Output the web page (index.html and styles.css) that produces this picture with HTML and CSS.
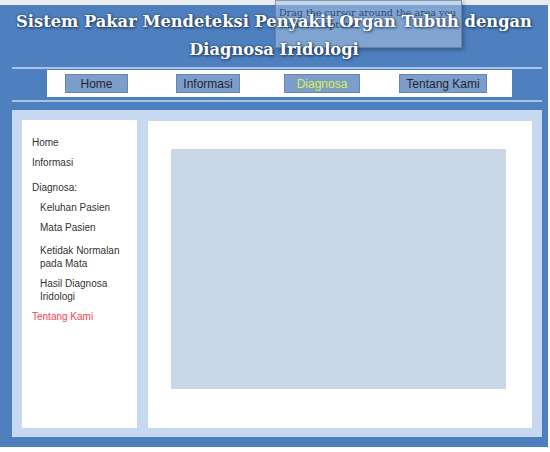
FILE: index.html
```html
<!DOCTYPE html>
<html lang="id">
<head>
    <meta charset="UTF-8">
    <meta name="viewport" content="width=device-width, initial-scale=1.0">
    <title>Sistem Pakar Iridologi</title>
    <link rel="stylesheet" href="styles.css">
</head>
<body>
    <div class="page">
        <header>
            <h1>Sistem Pakar Mendeteksi Penyakit Organ Tubuh dengan<br>Diagnosa Iridologi</h1>
        </header>
        <div class="menu-wrap">
            <nav class="menu">
                <a href="#" class="btn btn-home">Home</a>
                <a href="#" class="btn btn-info">Informasi</a>
                <a href="#" class="btn btn-diag active">Diagnosa</a>
                <a href="#" class="btn btn-about">Tentang Kami</a>
            </nav>
        </div>
        <div class="content">
            <aside class="sidebar">
                <a href="#" class="side-link">Home</a>
                <a href="#" class="side-link">Informasi</a>
                <div class="side-title">Diagnosa:</div>
                <a href="#" class="side-sub">Keluhan Pasien</a>
                <a href="#" class="side-sub">Mata Pasien</a>
                <a href="#" class="side-sub spaced">Ketidak Normalan pada Mata</a>
                <a href="#" class="side-sub">Hasil Diagnosa Iridologi</a>
                <a href="#" class="side-link current">Tentang Kami</a>
            </aside>
            <main class="main">
                <div class="image-box"></div>
            </main>
        </div>
    </div>

    <div class="snip-tip">Drag the cursor around the area you<br>want to capture.</div>
</body>
</html>
```

FILE: styles.css
```css
body {
    margin: 0;
    padding: 0;
    background: #ffffff;
    font-family: 'Liberation Sans', Arial, sans-serif;
    border-top: 5px solid #e9edf2;
}
.page {
    width: 548px;
    box-sizing: border-box;
    background: #4e80bf;
    padding: 0 6px 10px 12px;
}
header {
    height: 64px;
    box-sizing: border-box;
    padding-top: 3px;
    border-bottom: 2px solid #a8c3e5;
    position: relative;
    z-index: 2;
}
header h1 {
    margin: 0 0 0 -6px;
    font-family: 'DejaVu Serif', Georgia, serif;
    font-weight: bold;
    font-size: 16.3px;
    line-height: 28px;
    text-align: center;
    color: #ffffff;
    text-shadow: 0 0 2px rgba(20, 40, 70, 0.7), 1px 1px 3px rgba(20, 40, 70, 0.8);
}
.menu-wrap {
    padding: 1px 30px 3px 35px;
    border-bottom: 2px solid #a8c3e5;
}
.menu {
    background: #ffffff;
    height: 27px;
    display: flex;
    align-items: center;
    padding-left: 18px;
}
.btn {
    display: block;
    height: 19px;
    line-height: 19px;
    box-sizing: border-box;
    text-align: center;
    background: #7d9dca;
    border: 1px solid #6686b6;
    color: #1f2633;
    font-size: 12px;
    text-decoration: none;
}
.btn-home { width: 63px; }
.btn-info { width: 64px; margin-left: 48px; }
.btn-diag { width: 76px; margin-left: 44px; }
.btn-about { width: 88px; margin-left: 39px; }
.btn.active {
    color: #d8f24a;
}
.content {
    margin-top: 8px;
    background: #c6d9f1;
    padding: 10px 10px 9px 10px;
    display: flex;
    gap: 11px;
    height: 327px;
    box-sizing: border-box;
}
.sidebar {
    width: 115px;
    background: #ffffff;
    padding: 16px 0 0 10px;
    box-sizing: border-box;
    display: flex;
    flex-direction: column;
    align-items: flex-start;
}
.side-link,
.side-title,
.side-sub {
    font-size: 10px;
    line-height: 13px;
    color: #333333;
    text-decoration: none;
    margin-bottom: 7px;
}
.side-title {
    margin-top: 5px;
}
.side-sub {
    margin-left: 8px;
    max-width: 82px;
}
.side-sub.spaced {
    margin-top: 3px;
}
.side-link.current {
    color: #f2434f;
}
.main {
    flex: 1;
    background: #ffffff;
    margin-top: 1px;
    padding: 28px 26px 39px 23px;
}
.image-box {
    height: 100%;
    background: #c8d6e6;
}
.snip-tip {
    position: absolute;
    left: 275px;
    top: 0;
    width: 187px;
    height: 48px;
    box-sizing: border-box;
    padding: 6px 0 0 3px;
    background: rgba(170, 195, 225, 0.55);
    border: 1px solid rgba(90, 110, 140, 0.6);
    box-shadow: 2px 2px 4px rgba(0, 0, 0, 0.3);
    font-family: 'DejaVu Serif', serif;
    font-size: 9.5px;
    line-height: 12px;
    color: #2d4a78;
    z-index: 1;
}
```
